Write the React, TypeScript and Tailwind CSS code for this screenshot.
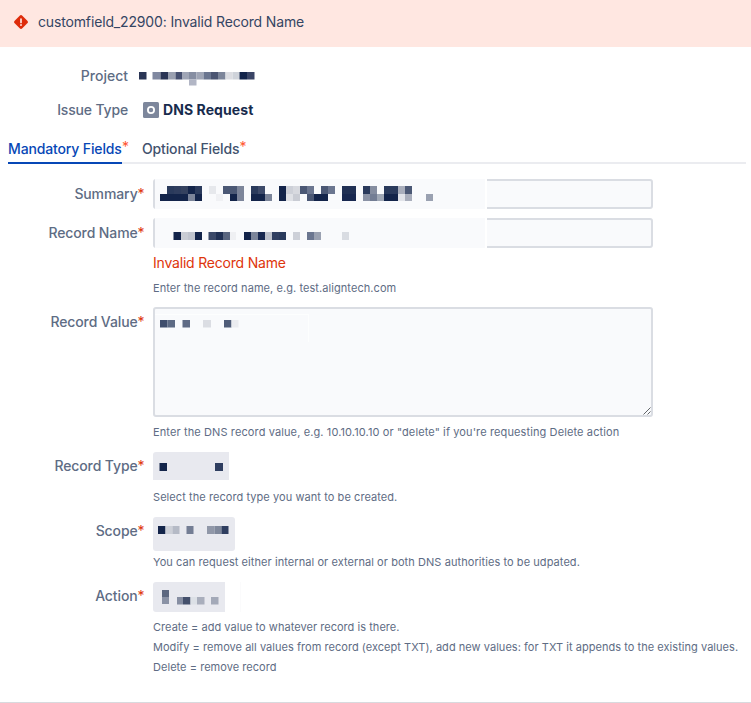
import type { ReactNode } from "react";

type Cell = [x: number, y: number, w: number, h: number, fill: string];

const N = "#13244a";

const projectCells: Cell[] = [
  [0, 5, 7.5, 7.5, "#2a3555"], [13.5, 5, 8, 7.5, "#8088a0"], [21.5, 5, 7.5, 7.5, "#2a3555"],
  [29, 5, 7.5, 7.5, "#9aa0b0"], [36.5, 5, 7, 7.5, "#465070"], [43.5, 5, 6.5, 7.5, "#a0a6b6"],
  [50, 5, 7.5, 7.5, "#868ea2"], [50, 12.5, 7.5, 6, "#b2b6c5"], [57.5, 5, 7, 7.5, "#a0a6b6"],
  [64.5, 5, 7.5, 7.5, "#6b7690"], [72, 5, 7, 7.5, "#4b5572"], [79, 5, 7.5, 7.5, "#7c859a"],
  [86.5, 5, 7, 7.5, "#dcdde2"], [93.5, 5, 7, 7.5, "#cfd3da"], [100.5, 5, 7.5, 7.5, N],
  [108, 5, 7.5, 7.5, "#3a4566"],
];

const summaryCells: Cell[] = [
  [12, 7, 7, 8, "#2a3a5c"], [19, 7, 7, 8, "#2f3d5e"], [26, 7, 7, 8, "#34415f"], [33, 7, 7, 8, N], [40, 7, 7, 8, "#2a3a5c"],
  [5, 15, 28, 7, N], [33, 15, 7, 7, "#7c859a"], [40, 15, 7, 7, N],
  [54, 7, 7, 8, "#e6e8ec"], [61, 15, 7, 7, "#f0f1f4"],
  [68, 7, 14, 8, "#4b5875"], [82, 7, 7, 8, "#7c859a"], [75, 15, 7, 7, N], [82, 15, 7, 7, "#7c859a"],
  [96, 7, 7, 8, "#2a3a5c"], [103, 7, 7, 8, "#3d4a6a"], [96, 15, 14, 7, N], [110, 15, 7, 7, "#7c859a"],
  [124, 7, 7, 15, N], [131, 7, 7, 8, "#cdd0d8"], [131, 15, 7, 7, "#dfe1e6"],
  [138, 7, 7, 8, "#d7d9df"], [138, 15, 7, 7, "#c9ccd4"],
  [145, 7, 7, 8, "#4b5875"], [152, 7, 7, 8, "#6b7690"], [152, 15, 7, 7, "#4b5875"], [159, 15, 14, 7, N],
  [166, 7, 7, 8, "#4b5875"], [173, 7, 7, 8, "#6b7690"],
  [187, 7, 14, 8, "#203054"], [187, 15, 14, 7, "#182850"],
  [208, 7, 7, 8, "#2a3a5c"], [215, 7, 7, 8, "#858da0"], [208, 15, 7, 7, "#8a92a5"], [215, 15, 7, 7, "#737d94"], [222, 15, 7, 7, "#a0a8b6"],
  [229, 7, 14, 8, "#2a3a5c"], [229, 15, 14, 7, N], [243, 7, 7, 8, "#a9aebc"], [243, 15, 7, 7, "#e1e3e9"],
  [250, 7, 7, 8, "#4b5875"], [250, 15, 7, 7, "#a9aebc"], [271, 15, 7, 7, "#9aa1b1"],
];

const recordNameCells: Cell[] = [
  [18.5, 14, 7.5, 8, N], [26, 14, 7, 8, "#c9ccd4"], [33, 14, 7, 8, "#c0c4ce"], [40, 14, 7, 8, N],
  [53.5, 14, 7.5, 8, "#3a4868"], [61, 14, 7, 8, "#203054"], [68, 14, 7, 8, "#5a6680"], [75, 14, 6, 8, "#eff0f3"],
  [89, 14, 7, 8, N], [96, 14, 7, 8, "#7c859a"], [103, 14, 7, 8, "#182850"], [110, 14, 7, 8, "#bdc1cb"],
  [117, 14, 7, 8, "#2f3e60"], [124, 14, 7, 8, "#2a3a5c"], [138, 14, 7, 8, "#cdd0d8"],
  [152, 14, 7, 8, "#6b7690"], [159, 14, 7, 8, "#9aa1b1"], [187, 14, 7, 8, "#d9dce2"],
];

const recordValueCells: Cell[] = [
  [5, 5, 7.5, 7.5, "#3f4d6c"], [12.5, 5, 7.5, 7.5, "#5d6a84"], [27.5, 5, 7.5, 7.5, "#5f6b85"],
  [48, 5, 8, 7.5, "#dbdde3"], [69, 5, 7.5, 7.5, "#4f5c78"], [76.5, 5, 7, 7.5, "#ebecf0"],
];

const recordTypeCells: Cell[] = [[6.5, 11, 7.5, 8, N], [62, 11, 8, 8, "#2f3e60"]];

const scopeCells: Cell[] = [
  [5, 9, 7.5, 8, N], [12.5, 9, 7, 8, "#cdd0d8"], [19.5, 9, 7, 8, "#b5bac6"], [33.5, 9, 7, 8, "#737d94"],
  [54, 9, 7.5, 8, "#9097a8"], [61.5, 9, 7, 8, "#7f889b"], [68.5, 9, 7, 8, "#2f3e60"],
];

const actionCells: Cell[] = [
  [9, 8, 7, 7, "#5d6880"], [9, 15, 7, 7, "#8a92a5"], [24, 15, 6, 7.5, "#868ea2"], [30, 15, 7.5, 7.5, "#44506c"],
  [37.5, 15, 6.5, 7.5, "#dce0e6"], [44, 15, 7.5, 7.5, "#a9aebc"], [58, 15, 7.5, 7.5, "#a3a9b8"],
];

function Mosaic({ cells, width, height }: { cells: Cell[]; width: number; height: number }) {
  return (
    <svg width={width} height={height} className="block shrink-0" aria-hidden="true">
      {cells.map(([x, y, w, h, fill], i) => (
        <rect key={i} x={x} y={y} width={w} height={h} fill={fill} />
      ))}
    </svg>
  );
}

function Field({ label, children }: { label: string; children: ReactNode }) {
  return (
    <div className="flex items-start">
      <label className="mr-[9px] w-[144px] shrink-0 pt-[5px] text-right text-sm leading-5 font-medium tracking-[-0.11px] whitespace-nowrap text-[#5e6c84]">
        {label}
        <span className="font-normal tracking-[-0.6px] text-[#de350b]">*</span>
      </label>
      <div className="min-w-0 flex-1">{children}</div>
    </div>
  );
}

function Hint({ tracking = "tracking-[0.07px]", children }: { tracking?: string; children: ReactNode }) {
  return <p className={`text-[11px] leading-5 whitespace-nowrap text-[#5e6c84] ${tracking}`}>{children}</p>;
}

function RedactedInput({ cells }: { cells: Cell[] }) {
  return (
    <div className="relative h-[30px] w-[500px] rounded-[3px] border-2 border-[#dadde3] bg-[#f9fafc]">
      <div className="absolute -top-0.5 left-0 h-[30px] w-[332px] border-r-2 border-white bg-[#f9fafc]">
        <Mosaic cells={cells} width={330} height={30} />
      </div>
    </div>
  );
}

export default function App() {
  return (
    <div className="flex h-[703px] w-[751px] flex-col overflow-hidden border-b border-[#d8dade] bg-white font-['Inter',sans-serif]">
      <div className="flex h-[47px] shrink-0 items-center bg-[#ffe7e1] pb-[3px] pl-[14px] text-[#344563]">
        <svg width="14" height="14" viewBox="0 0 14 14" className="mr-[10px]">
          <rect x="1.6" y="1.6" width="10.8" height="10.8" rx="1.9" transform="rotate(45 7 7)" fill="#de2c0b" />
          <path d="M7 4v3.5" stroke="#ffe7e1" strokeWidth="1.7" strokeLinecap="round" />
          <circle cx="7" cy="10" r="0.95" fill="#ffe7e1" />
        </svg>
        <span className="text-sm leading-5 tracking-[-0.15px]">customfield_22900: Invalid Record Name</span>
      </div>

      <div className="mt-[19px] flex h-5 shrink-0 items-center text-sm leading-5 font-medium text-[#5e6c84]">
        <span className="mr-[11px] w-[128px] text-right">Project</span>
        <Mosaic cells={projectCells} width={116} height={19} />
      </div>
      <div className="mt-[14px] flex h-5 shrink-0 items-center text-sm leading-5 font-medium text-[#5e6c84]">
        <span className="w-[128px] text-right tracking-[-0.17px]">Issue Type</span>
        <svg width="16" height="16" viewBox="0 0 16 16" className="mr-1 ml-[15px]">
          <rect width="16" height="16" rx="1.5" fill="#7d879c" />
          <circle cx="8" cy="8" r="3.1" fill="none" stroke="white" strokeWidth="1.8" />
        </svg>
        <strong className="font-bold tracking-[0.08px] text-[#172b4d]">DNS Request</strong>
      </div>

      <div className="mt-[19px] mr-[5px] ml-2 flex h-[25px] shrink-0 gap-[15px] border-b-2 border-[#ebecf0] text-sm leading-5 font-medium tracking-[-0.14px]">
        <div className="relative h-[25px] w-[114px] border-b-2 border-[#0747b6] whitespace-nowrap text-[#0747b6]">
          Mandatory Fields<span className="absolute -top-0.5 left-full font-normal text-[#ff5630]">*</span>
        </div>
        <div className="relative ml-[5px] whitespace-nowrap text-[#42526e]">
          Optional Fields<span className="absolute -top-0.5 left-full font-normal text-[#ff5630]">*</span>
        </div>
      </div>

      <form className="mt-[15px] flex flex-col">
        <Field label="Summary">
          <RedactedInput cells={summaryCells} />
        </Field>
        <div className="h-[9px]" />
        <Field label="Record Name">
          <RedactedInput cells={recordNameCells} />
          <p className="mt-[5px] text-sm leading-5 tracking-[-0.2px] text-[#de350b]">Invalid Record Name</p>
          <div className="mt-[5px]"><Hint>Enter the record name, e.g. test.aligntech.com</Hint></div>
        </Field>
        <div className="h-[9px]" />
        <Field label="Record Value">
          <div className="relative h-[110px] w-[500px] rounded-[3px] border-2 border-[#dadde3] bg-[#f9fafc]">
            <div className="mt-[5px] h-[28px] w-[154px] border-t border-r border-white/70">
              <Mosaic cells={recordValueCells} width={153} height={27} />
            </div>
            <svg width="8" height="8" viewBox="0 0 8 8" className="absolute right-0 bottom-0" stroke="#4f5358" strokeWidth="0.9">
              <path d="M0.5 7.5L7.5 0.5M4.5 7.5L7.5 4.5" />
            </svg>
          </div>
          <div className="mt-[5px]"><Hint tracking="tracking-[0.115px]">Enter the DNS record value, e.g. 10.10.10.10 or "delete" if you're requesting Delete action</Hint></div>
        </Field>
        <div className="h-[9px]" />
        <Field label="Record Type">
          <div className="mt-px h-[28px] w-[76px] rounded-tl-[3px] bg-[#e8e9ef]">
            <Mosaic cells={recordTypeCells} width={76} height={28} />
          </div>
          <div className="mt-[7px]"><Hint>Select the record type you want to be created.</Hint></div>
        </Field>
        <div className="h-[9px]" />
        <Field label="Scope">
          <div className="mt-px h-[34px] w-[82px] rounded-[3px] bg-[#e8e9ef]">
            <Mosaic cells={scopeCells} width={82} height={34} />
          </div>
          <div className="mt-px"><Hint>You can request either internal or external or both DNS authorities to be udpated.</Hint></div>
        </Field>
        <div className="h-[9px]" />
        <Field label="Action">
          <div className="mt-px flex w-[88px] border-r border-[#fbfbfc]">
            <div className="h-[30px] w-[72px] rounded-l-[3px] bg-[#e8e9ef]">
              <Mosaic cells={actionCells} width={72} height={30} />
            </div>
          </div>
          <div className="mt-[5px]">
            <Hint tracking="tracking-[0.04px]">Create = add value to whatever record is there.</Hint>
            <Hint tracking="tracking-[0.04px]">Modify = remove all values from record (except TXT), add new values: for TXT it appends to the existing values.</Hint>
            <Hint tracking="tracking-[0.04px]">Delete = remove record</Hint>
          </div>
        </Field>
      </form>
    </div>
  );
}
